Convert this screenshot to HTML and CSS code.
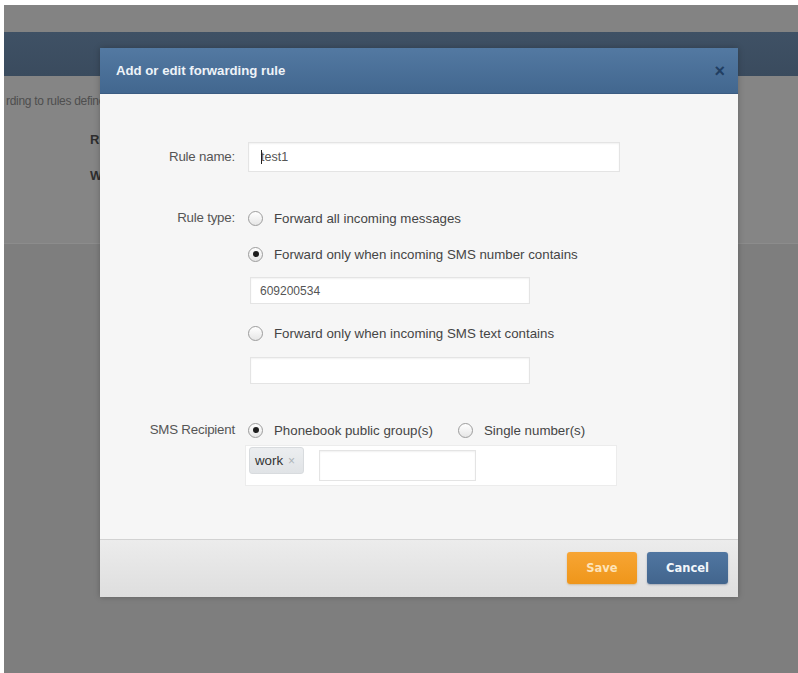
FILE: index.html
```html
<!DOCTYPE html>
<html lang="en">
<head>
<meta charset="utf-8">
<title>Add or edit forwarding rule</title>
<link rel="stylesheet" href="styles.css">
</head>
<body>
<div class="screen">
  <div class="topstrip"></div>
  <div class="navbar"></div>
  <div class="band">
    <p class="bg-intro">rding to rules defined below</p>
    <p class="bg-label bg-label-first">Rule</p>
    <p class="bg-label">When</p>
  </div>
</div>

<div class="modal">
  <div class="modal-header">
    <span class="modal-title">Add or edit forwarding rule</span>
    <span class="modal-close">×</span>
  </div>
  <div class="modal-body">
    <div class="row row-name">
      <span class="label">Rule name:</span>
      <div class="input input-name"><span class="caret"></span>test1</div>
    </div>

    <div class="row row-type">
      <span class="label">Rule type:</span>
      <div class="options">
        <div class="option"><span class="radio"></span><span class="opt-text">Forward all incoming messages</span></div>
        <div class="option option-2"><span class="radio checked"></span><span class="opt-text">Forward only when incoming SMS number contains</span></div>
        <div class="input input-small input-number">609200534</div>
        <div class="option option-3"><span class="radio"></span><span class="opt-text">Forward only when incoming SMS text contains</span></div>
        <div class="input input-small input-text"></div>
      </div>
    </div>

    <div class="row row-recipient">
      <span class="label">SMS Recipient</span>
      <div class="options">
        <div class="option-line">
          <div class="option"><span class="radio checked"></span><span class="opt-text">Phonebook public group(s)</span></div>
          <div class="option option-single"><span class="radio"></span><span class="opt-text">Single number(s)</span></div>
        </div>
        <div class="tagbox">
          <span class="tag">work <span class="tag-x">×</span></span>
          <div class="tag-input"></div>
        </div>
      </div>
    </div>
  </div>
  <div class="modal-footer">
    <button class="btn btn-save">Save</button>
    <button class="btn btn-cancel">Cancel</button>
  </div>
</div>
</body>
</html>
```

FILE: styles.css
```css
html, body {
  margin: 0;
  padding: 0;
  background: #ffffff;
  font-family: "Liberation Sans", Arial, sans-serif;
}

.screen {
  margin: 5px 0 0 4px;
  height: 668px;
  background: #7e7e7e;
  overflow: hidden;
}

.topstrip {
  height: 27px;
  background: #838383;
}

.navbar {
  height: 44px;
  background: linear-gradient(#3f5165, #3a4b5e);
}

.band {
  height: 166px;
  background: #858585;
  border-bottom: 1px solid #8c8c8c;
  padding-top: 1px;
}

.bg-intro {
  margin: 17px 0 0 2px;
  font-size: 12px;
  color: #4e4e4e;
  letter-spacing: -0.3px;
}

.bg-label {
  margin: 21px 0 0 86px;
  font-size: 13px;
  font-weight: bold;
  color: #2e2e2e;
}

.bg-label-first {
  margin-top: 24px;
}

/* modal */
.modal {
  position: absolute;
  left: 100px;
  top: 48px;
  width: 638px;
  height: 549px;
  display: flex;
  flex-direction: column;
  background: #f6f6f6;
  box-shadow: 0 0 6px rgba(0, 0, 0, 0.25);
}

.modal-header {
  height: 46px;
  flex: none;
  display: flex;
  align-items: center;
  justify-content: space-between;
  padding: 0 13px 0 16px;
  background: linear-gradient(#5379a2, #42678f);
  border-bottom: 1px solid #3b5c82;
  box-sizing: border-box;
}

.modal-title {
  color: #eef3f8;
  font-size: 13.2px;
  font-weight: bold;
}

.modal-close {
  color: #213e62;
  font-size: 18px;
  font-weight: bold;
  line-height: 1;
}

.modal-body {
  flex: 1;
  padding-top: 48px;
  color: #4a4a4a;
  font-size: 13.3px;
}

.row {
  display: flex;
  align-items: flex-start;
}

.label {
  width: 135px;
  flex: none;
  text-align: right;
  margin-right: 13px;
  color: #555555;
  line-height: 20px;
  letter-spacing: -0.2px;
}

.row-name {
  align-items: center;
}

.row-type {
  margin-top: 36px;
}

.row-recipient {
  margin-top: 36px;
}

.input {
  box-sizing: border-box;
  background: #ffffff;
  border: 1px solid #e4e4e4;
  box-shadow: inset 0 1px 2px rgba(0, 0, 0, 0.06);
  color: #555555;
  font-size: 12px;
  display: flex;
  align-items: center;
  padding-left: 9px;
}

.input-name {
  width: 372px;
  height: 30px;
  padding-left: 11px;
  font-size: 12.5px;
}

.caret {
  width: 1px;
  height: 14px;
  background: #222;
  position: relative;
  left: 1px;
}

.options {
  display: flex;
  flex-direction: column;
  align-items: flex-start;
}

.option {
  display: flex;
  align-items: center;
  height: 20px;
}

.option-2 {
  margin-top: 16px;
}

.option-3 {
  margin-top: 19px;
}

.input-small {
  width: 280px;
  height: 27px;
  margin-left: 2px;
}

.input-number {
  margin-top: 13px;
}

.input-text {
  margin-top: 14px;
}

.radio {
  width: 15px;
  height: 15px;
  box-sizing: border-box;
  border: 1px solid #9c9c9c;
  border-radius: 50%;
  background: linear-gradient(#ffffff, #e6e6e6);
  display: flex;
  align-items: center;
  justify-content: center;
  margin-right: 11px;
}

.radio.checked::after {
  content: "";
  width: 6px;
  height: 6px;
  border-radius: 50%;
  background: #1e1e1e;
}

.opt-text {
  color: #454545;
}

.option-line {
  display: flex;
}

.option-single {
  margin-left: 25px;
}

.tagbox {
  box-sizing: border-box;
  width: 372px;
  height: 41px;
  margin-top: 5px;
  margin-left: -3px;
  background: #ffffff;
  border: 1px solid #ececec;
  display: flex;
  align-items: flex-start;
  padding: 1px 0 0 3px;
}

.tag {
  box-sizing: border-box;
  width: 55px;
  height: 27px;
  background: linear-gradient(#eceef0, #e0e3e6);
  border: 1px solid #d8dbde;
  border-radius: 3px;
  font-size: 13.3px;
  color: #333333;
  display: flex;
  align-items: center;
  padding-left: 5px;
}

.tag-x {
  color: #aeb3b8;
  font-size: 12px;
  margin-left: 5px;
}

.tag-input {
  box-sizing: border-box;
  width: 157px;
  height: 31px;
  margin: 3px 0 0 15px;
  background: #ffffff;
  border: 1px solid #e4e4e4;
  box-shadow: inset 0 1px 2px rgba(0, 0, 0, 0.06);
}

/* footer */
.modal-footer {
  height: 58px;
  flex: none;
  box-sizing: border-box;
  border-top: 1px solid #d2d2d2;
  background: linear-gradient(#ececec, #dedede);
  display: flex;
  align-items: center;
  justify-content: flex-end;
  gap: 10px;
  padding: 0 10px 1px 0;
}

.btn {
  height: 32px;
  border: none;
  border-radius: 3px;
  font-family: "DejaVu Sans", "Liberation Sans", sans-serif;
  font-weight: bold;
  font-size: 11.5px;
  padding: 0;
  cursor: pointer;
}

.btn-save {
  width: 70px;
  background: linear-gradient(#f7a534, #ef961a);
  color: #fde3b8;
  box-shadow: 0 1px 2px rgba(160, 100, 0, 0.3);
}

.btn-cancel {
  width: 81px;
  background: linear-gradient(#5076a1, #42658d);
  color: #f2f6fa;
  box-shadow: 0 1px 2px rgba(20, 40, 80, 0.3);
}
```
